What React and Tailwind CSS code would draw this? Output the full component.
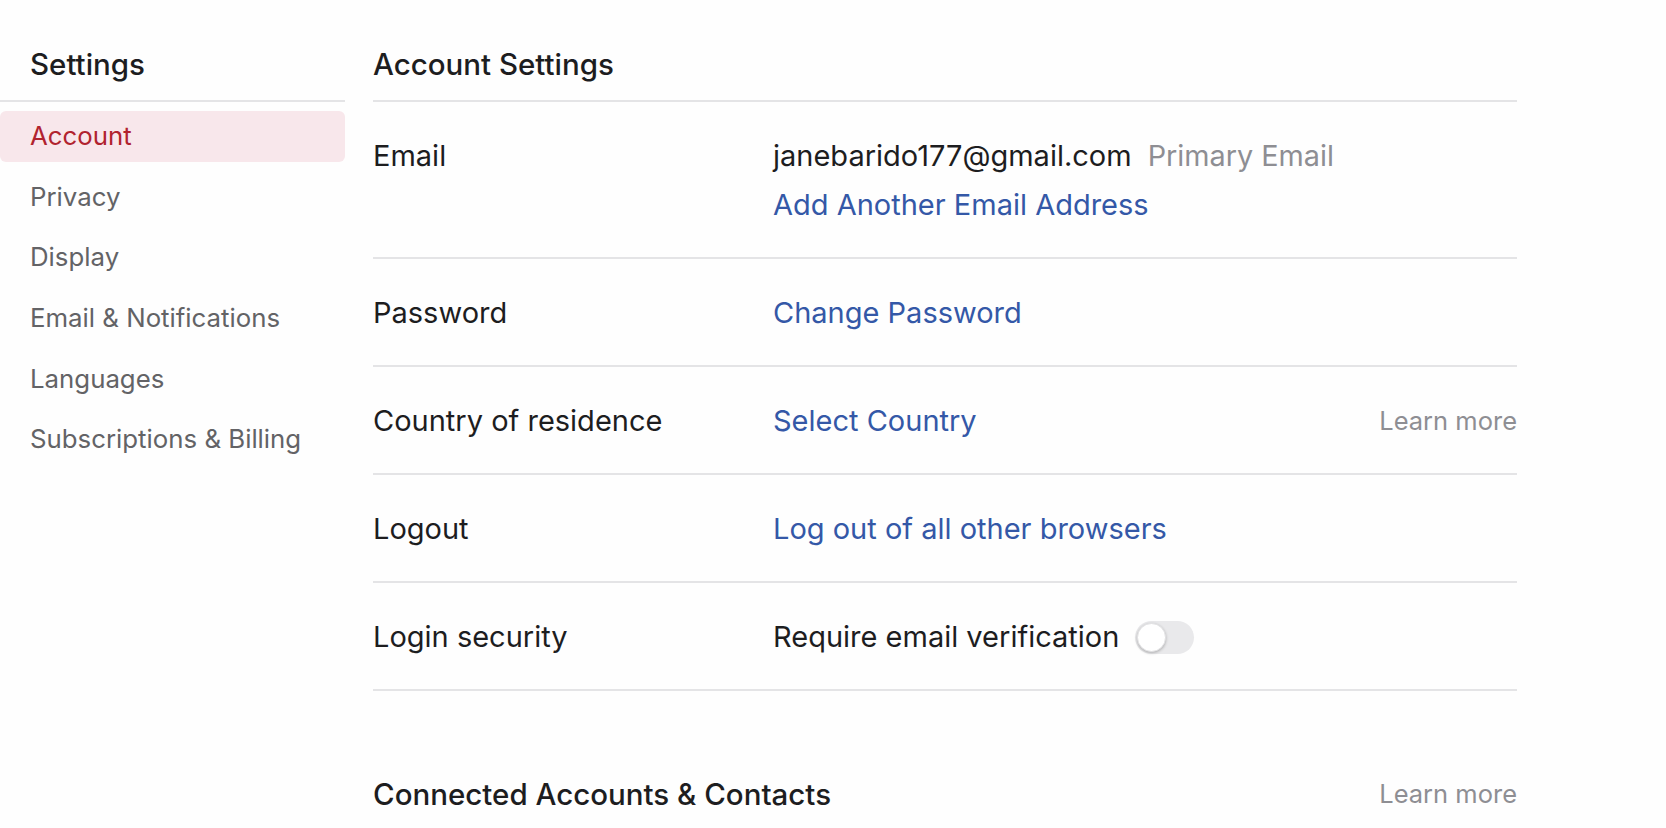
import React from 'react';

const navItems = ["Account", "Privacy", "Display", "Email & Notifications", "Languages", "Subscriptions & Billing"];

function Row({ label, children, right }) {
  return (
    <div className="flex items-start border-b-2 border-[#e4e4e6] pt-[36px] pb-[34px]">
      <div className="w-[400px] shrink-0 leading-[36px] text-[29px] text-[#1d1d1f]">{label}</div>
      <div className="flex-1 flex flex-col gap-[13px]">{children}</div>
      {right}
    </div>
  );
}

export default function App() {
  return (
    <div className="w-[1666px] h-[828px] overflow-hidden bg-[#fefefe] flex" style={{ fontFamily: 'Inter, "Noto Sans", sans-serif' }}>
      {/* sidebar */}
      <aside className="w-[345px] shrink-0">
        <div className="pt-[46px] pb-[18px] pl-[30px] border-b-2 border-[#e4e4e6]">
          <h2 className="text-[29.5px] leading-[36px] font-[550] text-[#1d1d1f]">Settings</h2>
        </div>
        <nav className="flex flex-col gap-[9.6px] pt-[9px]">
          {navItems.map((item, i) => (
            <div
              key={item}
              className={`h-[51px] flex items-center pl-[30px] rounded-md text-[25.8px] ${i === 0 ? "bg-[#f8e7eb] text-[#b1232f]" : "text-[#636366]"}`}
            >
              {item}
            </div>
          ))}
        </nav>
      </aside>

      {/* main */}
      <main className="ml-[28px] w-[1144px] shrink-0">
        <div className="pt-[46px] pb-[18px] border-b-2 border-[#e4e4e6]">
          <h1 className="text-[29.5px] leading-[36px] font-[550] text-[#1d1d1f]">Account Settings</h1>
        </div>

        <Row label="Email">
          <div className="flex items-center gap-[16px] leading-[36px]">
            <span className="text-[29px] text-[#1d1d1f]">janebarido177@gmail.com</span>
            <span className="text-[28.8px] text-[#8e8e93]">Primary Email</span>
          </div>
          <a className="text-[29px] leading-[36px] text-[#3458a7]">Add Another Email Address</a>
        </Row>

        <Row label="Password">
          <a className="text-[29px] leading-[36px] text-[#3458a7]">Change Password</a>
        </Row>

        <Row
          label="Country of residence"
          right={<span className="text-[25.5px] leading-[36px] text-[#8e8e93]">Learn more</span>}
        >
          <a className="text-[29px] leading-[36px] text-[#3458a7]">Select Country</a>
        </Row>

        <Row label="Logout">
          <a className="text-[29px] leading-[36px] text-[#3458a7]">Log out of all other browsers</a>
        </Row>

        <Row label="Login security">
          <div className="flex items-center gap-[16px]">
            <span className="text-[29px] leading-[36px] text-[#1d1d1f]">Require email verification</span>
            <button className="w-[59px] h-[33px] rounded-full bg-[#e9e9eb] p-[2px] flex items-center">
              <span className="w-[29px] h-[29px] rounded-full bg-white shadow-[0_1px_3px_rgba(0,0,0,0.25)] border border-[#e2e2e4]" />
            </button>
          </div>
        </Row>

        <div className="flex items-center justify-between pt-[85px]">
          <h2 className="text-[29.5px] leading-[36px] font-[550] text-[#1d1d1f]">Connected Accounts &amp; Contacts</h2>
          <span className="text-[25.5px] leading-[36px] text-[#8e8e93]">Learn more</span>
        </div>
      </main>
    </div>
  );
}
